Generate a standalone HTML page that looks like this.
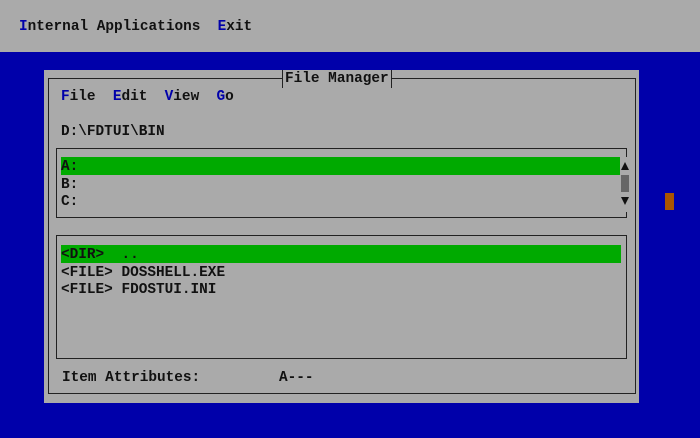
<!DOCTYPE html>
<html><head><meta charset="utf-8"><style>
body{margin:0;width:700px;height:438px;background:#0000aa;position:relative;overflow:hidden;font-family:"Liberation Mono",monospace;font-size:14.4px;color:#111;font-weight:bold}
.a{position:absolute;white-space:pre;line-height:18px;transform:translateY(1px)}
.h{color:#0000aa}
.ln{position:absolute;border:1.5px solid #222;box-sizing:border-box}
.g{position:absolute;background:#00aa00}
</style></head><body>
<div style="position:absolute;left:0;top:0;width:700px;height:52px;background:#aaa"></div>
<div class="a" style="left:19px;top:17px"><span class="h">I</span>nternal Applications  <span class="h">E</span>xit</div>
<div style="position:absolute;left:44px;top:70px;width:595px;height:333px;background:#aaa"></div>
<div class="ln" style="left:48px;top:78px;width:588px;height:316px"></div>
<div class="a" style="left:282px;top:69px;background:#aaa;padding:0 2px;border-left:1.5px solid #222;border-right:1.5px solid #222">File Manager</div>
<div class="a" style="left:61px;top:87px"><span class="h">F</span>ile  <span class="h">E</span>dit  <span class="h">V</span>iew  <span class="h">G</span>o</div>
<div class="a" style="left:61px;top:122px">D:\FDTUI\BIN</div>
<div class="ln" style="left:56px;top:148px;width:571px;height:70px"></div>
<div class="g" style="left:61px;top:157px;width:560px;height:18px"></div>
<div class="a" style="left:61px;top:157px">A:</div>
<div class="a" style="left:61px;top:175px">B:</div>
<div class="a" style="left:61px;top:192px">C:</div>
<div style="position:absolute;left:620px;top:157px;width:11px;height:55px;background:#aaa"></div>
<div style="position:absolute;left:621px;top:162px;width:0;height:0;border-left:4px solid transparent;border-right:4px solid transparent;border-bottom:8px solid #111"></div>
<div style="position:absolute;left:621px;top:175px;width:8px;height:17px;background:#666"></div>
<div style="position:absolute;left:621px;top:197px;width:0;height:0;border-left:4px solid transparent;border-right:4px solid transparent;border-top:8px solid #111"></div>
<div class="ln" style="left:56px;top:235px;width:571px;height:124px"></div>
<div class="g" style="left:61px;top:245px;width:560px;height:18px"></div>
<div class="a" style="left:61px;top:245px">&lt;DIR&gt;  ..</div>
<div class="a" style="left:61px;top:263px">&lt;FILE&gt; DOSSHELL.EXE</div>
<div class="a" style="left:61px;top:280px">&lt;FILE&gt; FDOSTUI.INI</div>
<div class="a" style="left:62px;top:368px">Item Attributes:</div>
<div class="a" style="left:279px;top:368px">A---</div>
<div style="position:absolute;left:665px;top:193px;width:9px;height:17px;background:#aa5500"></div>
</body></html>
